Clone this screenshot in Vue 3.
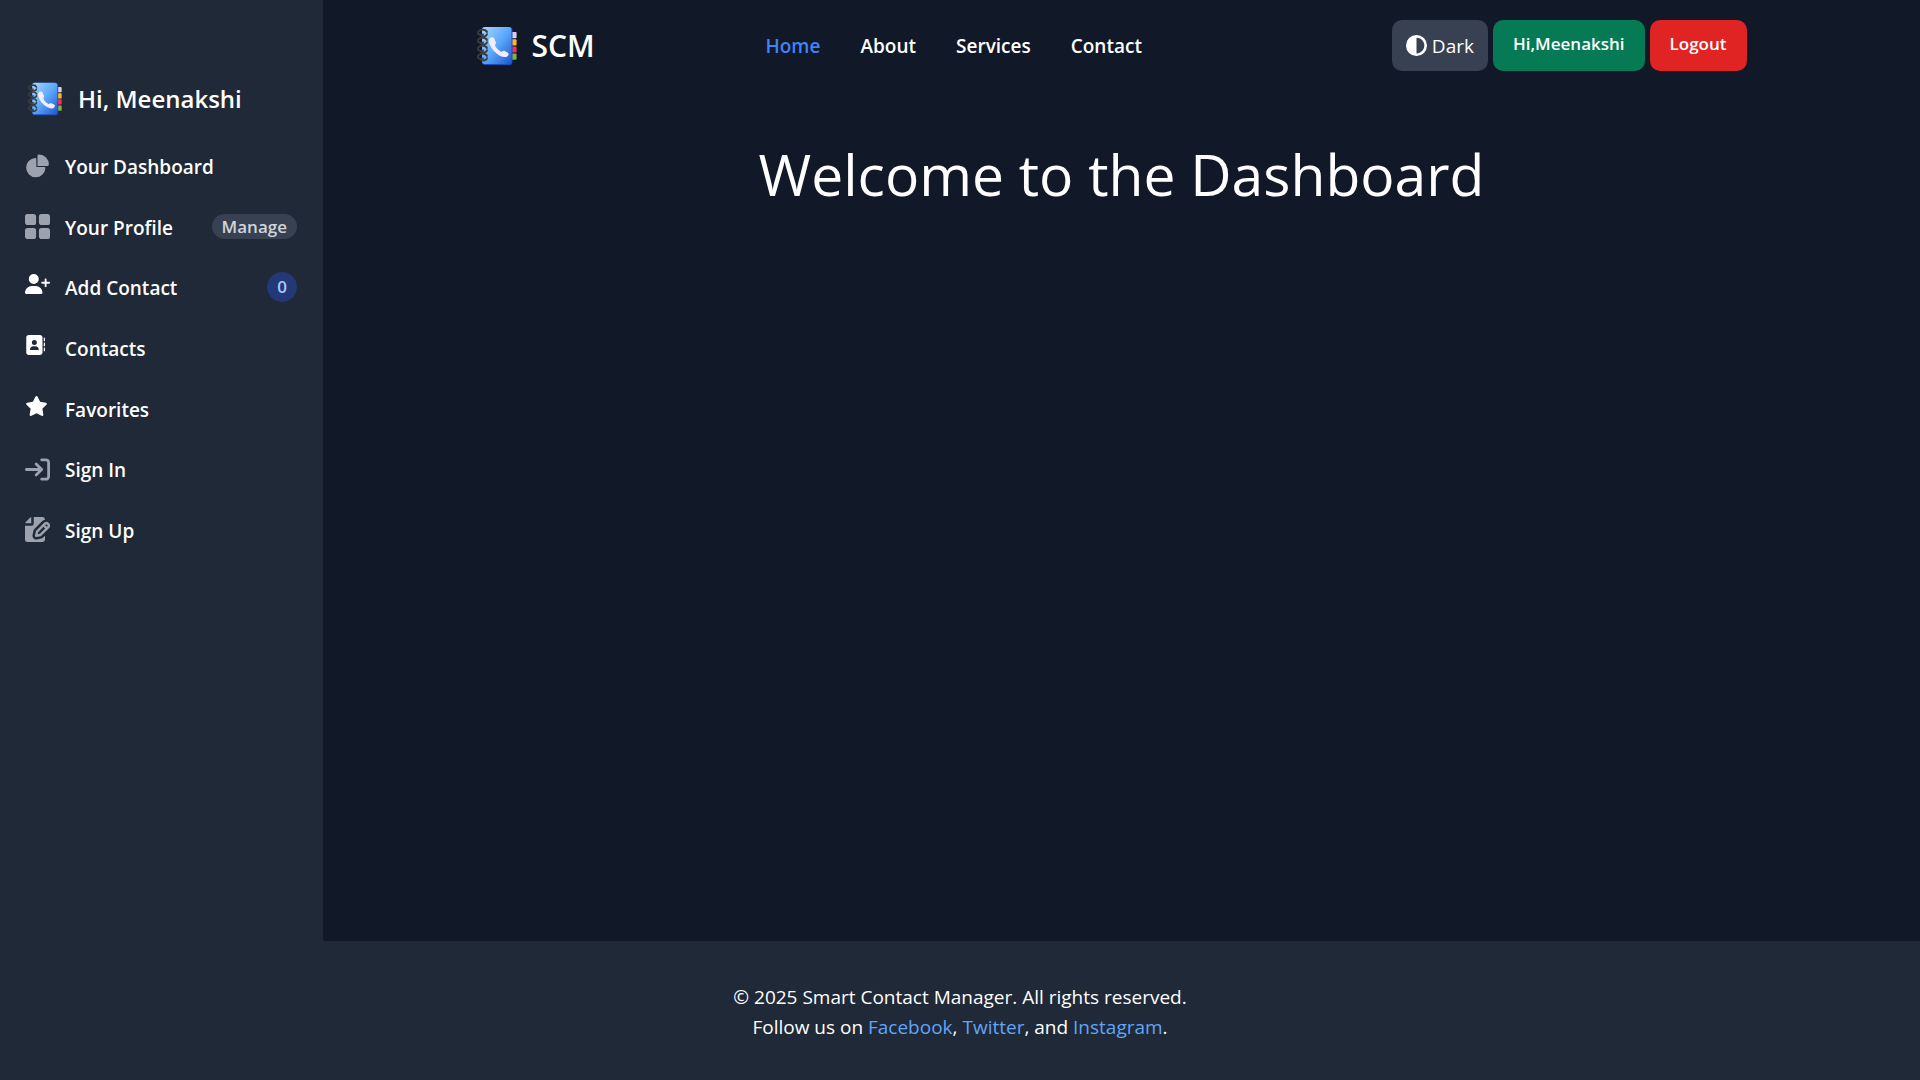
<script setup>
import { h } from 'vue'

const stops = [['0', '#a9d5ff'], ['0.5', '#5aa9fb'], ['1', '#1f55cf']]
const tabs = ['#d9cdf2', '#ffb81f', '#f72f5f', '#7fb53a']

const BookLogo = (props) =>
  h('svg', { viewBox: '0 0 40 40', 'aria-hidden': 'true' }, [
    h('defs', [
      h('linearGradient', { id: props.uid, x1: 0, y1: 0, x2: 1, y2: 1 },
        stops.map(([offset, color]) => h('stop', { offset, 'stop-color': color }))),
    ]),
    ...tabs.map((fill, i) => h('rect', { x: 34, y: 6 + i * 7.2, width: 5.6, height: 6.2, rx: 1, fill })),
    h('rect', { x: 5, y: 1, width: 30.5, height: 38, rx: 3, fill: '#1c4bbb' }),
    h('rect', { x: 5, y: 1, width: 29.5, height: 37, rx: 3, fill: `url(#${props.uid})` }),
    h('path', {
      d: 'M12.5 12.5c1.6-1.9 3.9-1.7 4.8.2l1.5 3.6c.5 1.4-.6 2.1-.8 3 .9 2.6 3.6 5.5 6.4 6.5 1.1-.2 1.9-1.3 3.2-.8l3.1 1.6c1.5 1 1.2 2.8-.5 3.9-3.4 1.9-9-.8-13-5.2-4-4.5-6.6-10.1-4.7-12.8z',
      fill: '#f1edfb',
    }),
    ...[7.5, 15.5, 23.5, 31.5].map((y) =>
      h('path', {
        d: `M10 ${y - 1.5}c-1-2-3-2.5-5-2.2-3 .3-4.3 2-4 3.4.4 1.6 3 1.8 5 1.3M4 ${y + 2.5}c2.5 1.2 5.5.2 6-1.8`,
        fill: 'none', stroke: '#3a3d42', 'stroke-width': 1.9, 'stroke-linecap': 'round',
      })),
  ])
BookLogo.props = ['uid']

const items = [
  {
    label: 'Your Dashboard', box: '0 0 22 21', kind: 'pie',
    paths: [
      'M16.975 11H10V4.025a1 1 0 0 0-1.066-.998 8.5 8.5 0 1 0 9.039 9.039.999.999 0 0 0-1-1.066h.002Z',
      'M12.5 0c-.157 0-.311.01-.565.027A1 1 0 0 0 11 1.02V10h8.975a1 1 0 0 0 1-.935c.013-.188.028-.374.028-.565A8.51 8.51 0 0 0 12.5 0Z',
    ],
  },
  {
    label: 'Your Profile', box: '0 0 18 18', kind: 'grid', badge: 'Manage',
    paths: [
      'M6.143 0H1.857A1.857 1.857 0 0 0 0 1.857v4.286C0 7.169.831 8 1.857 8h4.286A1.857 1.857 0 0 0 8 6.143V1.857A1.857 1.857 0 0 0 6.143 0Zm10 0h-4.286A1.857 1.857 0 0 0 10 1.857v4.286C10 7.169 10.831 8 11.857 8h4.286A1.857 1.857 0 0 0 18 6.143V1.857A1.857 1.857 0 0 0 16.143 0Zm-10 10H1.857A1.857 1.857 0 0 0 0 11.857v4.286C0 17.169.831 18 1.857 18h4.286A1.857 1.857 0 0 0 8 16.143v-4.286A1.857 1.857 0 0 0 6.143 10Zm10 0h-4.286A1.857 1.857 0 0 0 10 11.857v4.286c0 1.026.831 1.857 1.857 1.857h4.286A1.857 1.857 0 0 0 18 16.143v-4.286A1.857 1.857 0 0 0 16.143 10Z',
    ],
  },
  {
    label: 'Add Contact', box: '0 0 640 512', kind: 'solid wide', count: 0,
    paths: [
      'M96 128a128 128 0 1 1 256 0A128 128 0 1 1 96 128zM0 482.3C0 383.8 79.8 304 178.3 304l91.4 0C368.2 304 448 383.8 448 482.3c0 16.4-13.3 29.7-29.7 29.7L29.7 512C13.3 512 0 498.7 0 482.3zM504 312l0-64-64 0c-13.3 0-24-10.7-24-24s10.7-24 24-24l64 0 0-64c0-13.3 10.7-24 24-24s24 10.7 24 24l0 64 64 0c13.3 0 24 10.7 24 24s-10.7 24-24 24l-64 0 0 64c0 13.3-10.7 24-24 24s-24-10.7-24-24z',
    ],
  },
  {
    label: 'Contacts', box: '0 0 512 512', kind: 'solid',
    paths: [
      'M96 0C60.7 0 32 28.7 32 64l0 384c0 35.3 28.7 64 64 64l288 0c35.3 0 64-28.7 64-64l0-384c0-35.3-28.7-64-64-64L96 0zM208 288l64 0c44.2 0 80 35.8 80 80c0 8.8-7.2 16-16 16l-192 0c-8.8 0-16-7.2-16-16c0-44.2 35.8-80 80-80zm-32-96a64 64 0 1 1 128 0 64 64 0 1 1 -128 0zM512 80c0-8.8-7.2-16-16-16s-16 7.2-16 16l0 64c0 8.8 7.2 16 16 16s16-7.2 16-16l0-64zM496 192c-8.8 0-16 7.2-16 16l0 64c0 8.8 7.2 16 16 16s16-7.2 16-16l0-64c0-8.8-7.2-16-16-16zm16 144c0-8.8-7.2-16-16-16s-16 7.2-16 16l0 64c0 8.8 7.2 16 16 16s16-7.2 16-16l0-64z',
    ],
  },
  {
    label: 'Favorites', box: '0 0 576 512', kind: 'solid star',
    paths: [
      'M316.9 18C311.6 7 300.4 0 288.1 0s-23.4 7-28.8 18L195 150.3 51.4 171.5c-12 1.8-22 10.2-25.7 21.7s-.7 24.2 7.9 32.7L137.8 329 113.2 474.7c-2 12 3 24.2 12.9 31.3s23 8 33.8 2.3l128.3-68.5 128.3 68.5c10.8 5.7 23.9 4.9 33.8-2.3s14.9-19.3 12.9-31.3L438.5 329 542.7 225.9c8.6-8.5 11.7-21.2 7.9-32.7s-13.7-19.9-25.7-21.7L381.2 150.3 316.9 18z',
    ],
  },
  {
    label: 'Sign In', box: '0 0 18 16', kind: 'line',
    paths: ['M1 8h11m0 0L8 4m4 4-4 4m4-11h3a2 2 0 0 1 2 2v10a2 2 0 0 1-2 2h-3'],
  },
  {
    label: 'Sign Up', box: '0 0 20 20', kind: 'note',
    paths: [
      'M5 5V.13a2.96 2.96 0 0 0-1.293.749L.879 3.707A2.96 2.96 0 0 0 .13 5H5Z',
      'M6.737 11.061a2.961 2.961 0 0 1 .81-1.515l6.117-6.116A4.839 4.839 0 0 1 16 2.141V2a1.97 1.97 0 0 0-1.933-2H7v5a2 2 0 0 1-2 2H0v11a1.969 1.969 0 0 0 1.933 2h12.134A1.97 1.97 0 0 0 16 18v-3.093l-1.546 1.546c-.413.413-.94.695-1.513.81l-3.4.679a2.947 2.947 0 0 1-1.85-.227 2.96 2.96 0 0 1-1.635-3.257l.681-3.397Z',
      'M8.961 16a.93.93 0 0 0 .189-.019l3.4-.679a.961.961 0 0 0 .49-.263l6.118-6.117a2.884 2.884 0 0 0-4.079-4.078l-6.117 6.117a.96.96 0 0 0-.263.491l-.679 3.4A.961.961 0 0 0 8.961 16Zm7.477-9.8a.958.958 0 0 1 .68-.281.961.961 0 0 1 .682 1.644l-.315.315-1.36-1.36.313-.318Zm-5.911 5.911 4.236-4.236 1.359 1.359-4.236 4.237-1.7.339.341-1.699Z',
    ],
  },
]

const links = ['Home', 'About', 'Services', 'Contact']
</script>

<template>
  <div class="page">
    <aside class="sidebar">
      <a class="user" href="#">
        <BookLogo class="user-logo" uid="book-side" />
        <span>Hi, Meenakshi</span>
      </a>
      <ul class="menu">
        <li v-for="item in items" :key="item.label">
          <a class="item" href="#">
            <span class="icon" :class="item.kind">
              <svg :viewBox="item.box" aria-hidden="true">
                <path v-for="d in item.paths" :key="d" :d="d" />
              </svg>
            </span>
            <span class="label">{{ item.label }}</span>
            <span v-if="item.badge" class="badge">{{ item.badge }}</span>
            <span v-if="item.count !== undefined" class="count">{{ item.count }}</span>
          </a>
        </li>
      </ul>
    </aside>

    <div class="content">
      <header class="topbar">
        <a class="brand" href="#">
          <BookLogo class="brand-logo" uid="book-top" />
          <span>SCM</span>
        </a>
        <nav class="links">
          <a v-for="(link, i) in links" :key="link" href="#" :class="{ active: i === 0 }">{{ link }}</a>
        </nav>
        <div class="actions">
          <button type="button" class="theme">
            <svg viewBox="0 0 512 512" aria-hidden="true">
              <path d="M448 256c0-106-86-192-192-192V448c106 0 192-86 192-192zM0 256a256 256 0 1 1 512 0A256 256 0 1 1 0 256z" />
            </svg>
            <span>Dark</span>
          </button>
          <a class="btn hello" href="#">Hi,Meenakshi</a>
          <a class="btn logout" href="#">Logout</a>
        </div>
      </header>
      <main>
        <h1>Welcome to the Dashboard</h1>
      </main>
    </div>

    <footer class="footer">
      <p>© 2025 Smart Contact Manager. All rights reserved.</p>
      <p>
        Follow us on <a href="#">Facebook</a>, <a href="#">Twitter</a>, and <a href="#">Instagram</a>.
      </p>
    </footer>
  </div>
</template>

<style>
body {
  margin: 0;
  background: #111827;
}
</style>

<style scoped>
.page {
  display: grid;
  grid-template: 1fr auto / 323px 1fr;
  min-height: 100vh;
  background: #111827;
  color: #fff;
  font: 400 19px/30px "Segoe UI", "Open Sans", "Noto Sans", sans-serif;
}
a {
  color: inherit;
  text-decoration: none;
}
svg {
  display: block;
}

.sidebar {
  box-sizing: border-box;
  padding: 81px 16px 0 15px;
  background: #1f2937;
}
.user {
  display: flex;
  align-items: center;
  gap: 15px;
  height: 36px;
  padding-left: 12px;
  font-size: 24px;
  font-weight: 600;
}
.user-logo {
  width: 36px;
  height: 34px;
}
.menu {
  display: grid;
  grid-template-rows: repeat(7, 1fr);
  height: 424px;
  margin: 19px 0 0;
  padding: 0;
  list-style: none;
}
.item {
  display: flex;
  align-items: center;
  box-sizing: border-box;
  height: 100%;
  padding: 0 10px;
  font-weight: 600;
}
.icon {
  width: 25px;
  margin-right: 15px;
}
.icon svg {
  width: 25px;
  height: 25px;
  fill: #9ca3af;
}
.icon.line svg {
  fill: none;
  stroke: #9ca3af;
  stroke-width: 2;
  stroke-linecap: round;
  stroke-linejoin: round;
}
.icon.solid {
  padding-bottom: 6px;
}
.icon.solid svg {
  width: 20px;
  height: 20px;
  fill: #fff;
}
.icon.wide svg {
  width: 25px;
}
.icon.star svg {
  width: 23px;
}
.label {
  flex: 1;
  padding-top: 2px;
}
.badge,
.count {
  border-radius: 15px;
  font-size: 17px;
}
.badge {
  padding: 0 10px;
  background: #374151;
  color: #d1d5db;
  line-height: 25px;
}
.count {
  width: 30px;
  background: #233876;
  color: #a4cafe;
  text-align: center;
}

.topbar {
  display: grid;
  grid-template-columns: 289px 1fr auto;
  align-items: center;
  box-sizing: border-box;
  max-width: 1296px;
  min-height: 91px;
  margin: 0 auto;
  padding: 0 23px 0 3px;
}
.brand {
  display: flex;
  align-items: center;
  gap: 15px;
  font-size: 30px;
  font-weight: 600;
}
.brand-logo {
  width: 40px;
  height: 40px;
}
.links {
  display: flex;
  gap: 40px;
  font-weight: 600;
}
.links .active {
  color: #3f83f8;
}
.actions {
  display: flex;
  gap: 5px;
}
.theme,
.btn {
  box-sizing: border-box;
  height: 51px;
  border: 0;
  border-radius: 10px;
  color: #fff;
}
.theme {
  display: flex;
  align-items: center;
  gap: 5px;
  padding: 0 14px;
  background: #374151;
  font: inherit;
}
.theme svg {
  width: 21px;
  height: 21px;
  fill: #fff;
}
.btn {
  padding: 9px 20px;
  font-size: 17px;
  font-weight: 600;
}
.hello {
  background: #057a55;
}
.logout {
  background: #e02424;
}

h1 {
  margin: 43px 0 0;
  font-size: 57px;
  font-weight: 400;
  line-height: 80px;
  text-align: center;
}

.footer {
  grid-column: 1 / -1;
  padding: 41px 20px 38px;
  background: #1f2937;
  text-align: center;
}
.footer p {
  margin: 0;
}
.footer a {
  color: #60a5fa;
}
</style>
